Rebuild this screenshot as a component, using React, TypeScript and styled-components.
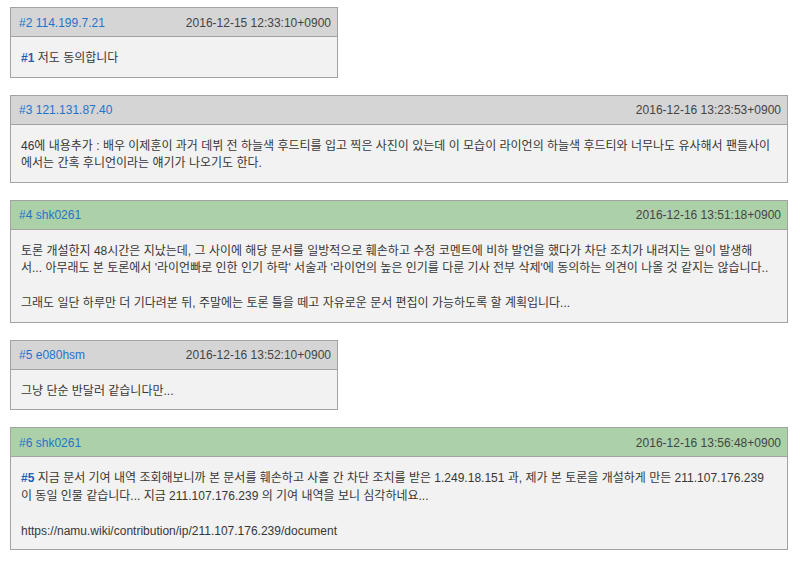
import React from "react"
import styled, { createGlobalStyle } from "styled-components"

const GlobalStyle = createGlobalStyle`
  body {
    margin: 0;
    background: #ffffff;
    font-family: "Liberation Sans", Arial, "Noto Sans CJK KR", sans-serif;
    font-size: 12px;
    color: #373737;
  }
`

const Page = styled.div`
  padding: 7px 12px 10px 10px;
  display: flex;
  flex-direction: column;
  align-items: flex-start;
  gap: 17px;
`

const Comment = styled.div<{ $wide: boolean }>`
  width: ${(p) => (p.$wide ? "778px" : "328px")};
  box-sizing: border-box;
  border: 1px solid #a3a3a3;
  background: #f2f2f2;
`

const Header = styled.div<{ $op: boolean }>`
  height: 29px;
  box-sizing: border-box;
  display: flex;
  align-items: center;
  justify-content: space-between;
  padding: 1px 6px 0 8px;
  background: ${(p) => (p.$op ? "#acd1a9" : "#d5d5d5")};
  border-bottom: 1px solid #a3a3a3;
`

const Author = styled.span`
  color: #1f74c9;
`

const Time = styled.span`
  color: #444444;
`

const Body = styled.div`
  padding: 13px 10px 9px 10px;
  line-height: 17.5px;
`

const Line = styled.div`
  white-space: nowrap;
  min-height: 17.5px;
`

const Ref = styled.b`
  color: #1f5fb6;
`

type Item = {
  no: number
  who: string
  time: string
  op: boolean
  wide: boolean
  refTo?: number
  lines: string[]
}

const items: Item[] = [
  {
    no: 2,
    who: "114.199.7.21",
    time: "2016-12-15 12:33:10+0900",
    op: false,
    wide: false,
    refTo: 1,
    lines: ["저도 동의합니다"],
  },
  {
    no: 3,
    who: "121.131.87.40",
    time: "2016-12-16 13:23:53+0900",
    op: false,
    wide: true,
    lines: [
      "46에 내용추가 : 배우 이제훈이 과거 데뷔 전 하늘색 후드티를 입고 찍은 사진이 있는데 이 모습이 라이언의 하늘색 후드티와 너무나도 유사해서 팬들사이",
      "에서는 간혹 후니언이라는 얘기가 나오기도 한다.",
    ],
  },
  {
    no: 4,
    who: "shk0261",
    time: "2016-12-16 13:51:18+0900",
    op: true,
    wide: true,
    lines: [
      "토론 개설한지 48시간은 지났는데, 그 사이에 해당 문서를 일방적으로 훼손하고 수정 코멘트에 비하 발언을 했다가 차단 조치가 내려지는 일이 발생해",
      "서... 아무래도 본 토론에서 '라이언빠로 인한 인기 하락' 서술과 '라이언의 높은 인기를 다룬 기사 전부 삭제'에 동의하는 의견이 나올 것 같지는 않습니다..",
      "",
      "그래도 일단 하루만 더 기다려본 뒤, 주말에는 토론 틀을 떼고 자유로운 문서 편집이 가능하도록 할 계획입니다...",
    ],
  },
  {
    no: 5,
    who: "e080hsm",
    time: "2016-12-16 13:52:10+0900",
    op: false,
    wide: false,
    lines: ["그냥 단순 반달러 같습니다만..."],
  },
  {
    no: 6,
    who: "shk0261",
    time: "2016-12-16 13:56:48+0900",
    op: true,
    wide: true,
    refTo: 5,
    lines: [
      "지금 문서 기여 내역 조회해보니까 본 문서를 훼손하고 사흘 간 차단 조치를 받은 1.249.18.151 과, 제가 본 토론을 개설하게 만든 211.107.176.239",
      "이 동일 인물 같습니다... 지금 211.107.176.239 의 기여 내역을 보니 심각하네요...",
      "",
      "https://namu.wiki/contribution/ip/211.107.176.239/document",
    ],
  },
]

export default function App() {
  return (
    <>
      <GlobalStyle />
      <Page>
        {items.map((it) => (
          <Comment key={it.no} $wide={it.wide}>
            <Header $op={it.op}>
              <Author>
                #{it.no} {it.who}
              </Author>
              <Time>{it.time}</Time>
            </Header>
            <Body>
              {it.lines.map((l, i) => (
                <Line key={i}>
                  {i === 0 && it.refTo ? <Ref>#{it.refTo}</Ref> : null}
                  {i === 0 && it.refTo ? " " : null}
                  {l}
                </Line>
              ))}
            </Body>
          </Comment>
        ))}
      </Page>
    </>
  )
}
